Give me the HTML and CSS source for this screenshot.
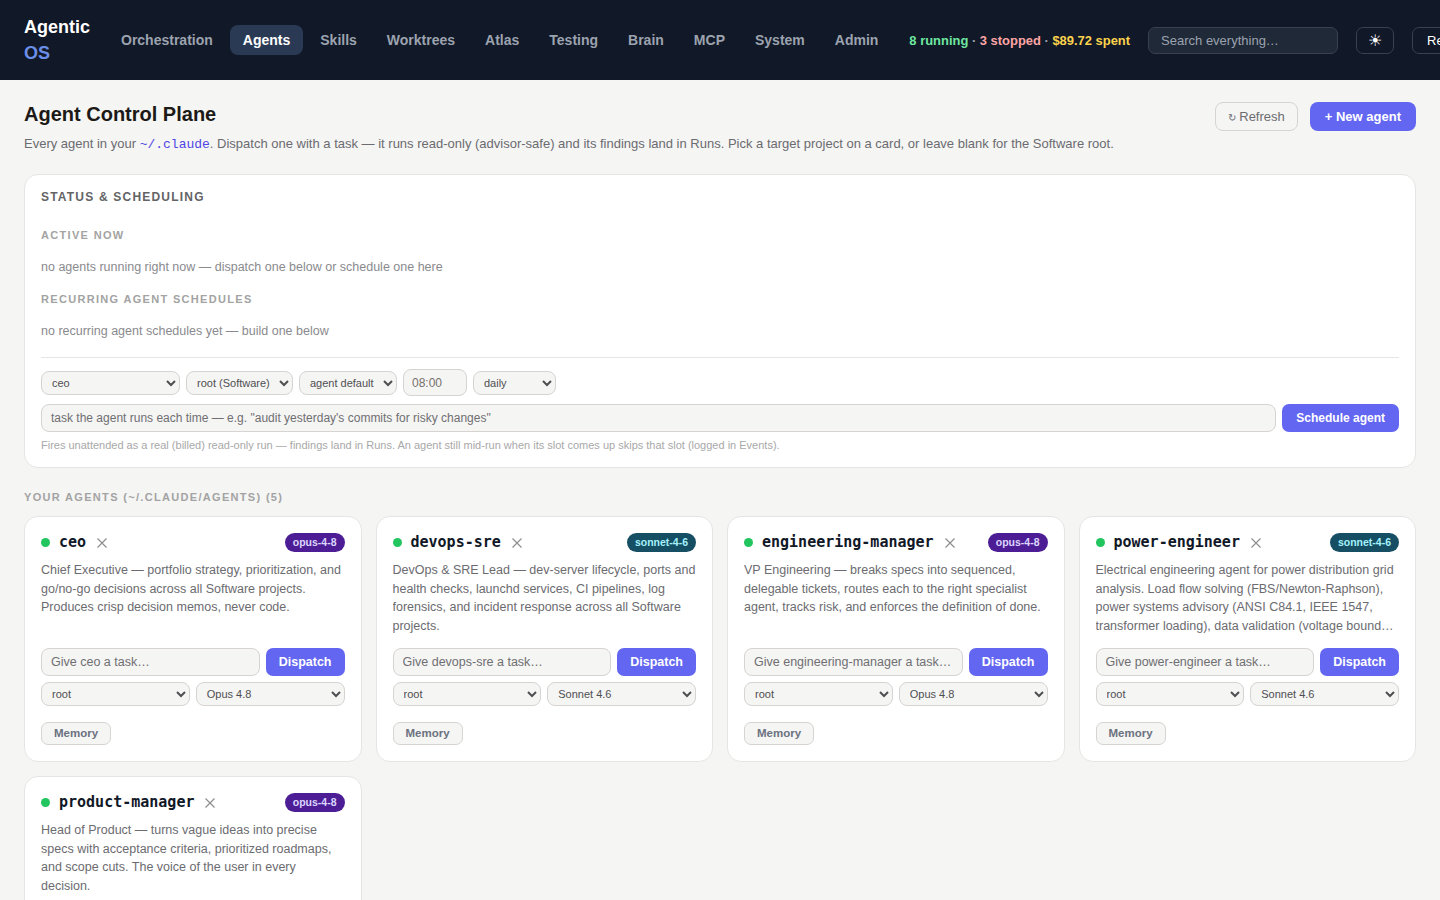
FILE: index.html
```html
<!DOCTYPE html>
<html>

<head>
    <meta http-equiv="Content-Type" content="text/html; charset=utf-8" />
    <title>Agentic OS - Agents</title>
    <link rel="stylesheet" href="styles.css">
</head>

<body>
    <header class="topbar">
        <div class="logo">Agentic <span>OS</span></div>
        <nav class="nav">
            <a>Orchestration</a>
            <a class="active">Agents</a>
            <a>Skills</a>
            <a>Worktrees</a>
            <a>Atlas</a>
            <a>Testing</a>
            <a>Brain</a>
            <a>MCP</a>
            <a>System</a>
            <a>Admin</a>
        </nav>
        <div class="stats"><span class="green">8 running</span> · <span class="red">3 stopped</span> · <span class="amber">$89.72 spent</span></div>
        <input class="search" placeholder="Search everything…" />
        <button class="theme">☀</button>
        <button class="ghost-top">Refresh</button>
    </header>

    <main class="page">
        <div class="page-head">
            <div>
                <h1>Agent Control Plane</h1>
                <p class="sub">Every agent in your <code>~/.claude</code>. Dispatch one with a task — it runs read-only (advisor-safe) and its findings land in Runs. Pick a target project on a card, or leave blank for the Software root.</p>
            </div>
            <div class="head-actions">
                <button class="btn-outline"><span>↻</span> Refresh</button>
                <button class="btn-primary">+ New agent</button>
            </div>
        </div>

        <section class="panel">
            <h2>Status &amp; Scheduling</h2>
            <h3>Active now</h3>
            <p class="empty">no agents running right now — dispatch one below or schedule one here</p>
            <h3>Recurring agent schedules</h3>
            <p class="empty">no recurring agent schedules yet — build one below</p>
            <div class="sched">
                <div class="sched-row">
                    <select class="s-agent"><option>ceo</option></select>
                    <select><option>root (Software)</option></select>
                    <select><option>agent default</option></select>
                    <input class="s-time" value="08:00" />
                    <select class="s-freq"><option>daily</option></select>
                </div>
                <div class="sched-task">
                    <input placeholder="task the agent runs each time — e.g. &quot;audit yesterday's commits for risky changes&quot;" />
                    <button class="btn-primary">Schedule agent</button>
                </div>
                <p class="note">Fires unattended as a real (billed) read-only run — findings land in Runs. An agent still mid-run when its slot comes up skips that slot (logged in Events).</p>
            </div>
        </section>

        <div class="section-label">Your agents (~/.claude/agents) (5)</div>

        <div class="agents">
            <div class="card">
                <div class="card-head">
                    <i class="dot"></i><b>ceo</b>
                    <svg class="del" viewBox="0 0 12 12"><path d="M1.5 1.5l9 9M10.5 1.5l-9 9" /></svg>
                    <span class="tag opus">opus-4-8</span>
                </div>
                <p class="desc">Chief Executive — portfolio strategy, prioritization, and go/no-go decisions across all Software projects. Produces crisp decision memos, never code.</p>
                <div class="task"><input placeholder="Give ceo a task…" /><button class="btn-primary">Dispatch</button></div>
                <div class="pick"><select><option>root</option></select><select><option>Opus 4.8</option></select></div>
                <button class="memory">Memory</button>
            </div>

            <div class="card">
                <div class="card-head">
                    <i class="dot"></i><b>devops-sre</b>
                    <svg class="del" viewBox="0 0 12 12"><path d="M1.5 1.5l9 9M10.5 1.5l-9 9" /></svg>
                    <span class="tag sonnet">sonnet-4-6</span>
                </div>
                <p class="desc">DevOps &amp; SRE Lead — dev-server lifecycle, ports and health checks, launchd services, CI pipelines, log forensics, and incident response across all Software projects.</p>
                <div class="task"><input placeholder="Give devops-sre a task…" /><button class="btn-primary">Dispatch</button></div>
                <div class="pick"><select><option>root</option></select><select><option>Sonnet 4.6</option></select></div>
                <button class="memory">Memory</button>
            </div>

            <div class="card">
                <div class="card-head">
                    <i class="dot"></i><b>engineering-manager</b>
                    <svg class="del" viewBox="0 0 12 12"><path d="M1.5 1.5l9 9M10.5 1.5l-9 9" /></svg>
                    <span class="tag opus">opus-4-8</span>
                </div>
                <p class="desc">VP Engineering — breaks specs into sequenced, delegable tickets, routes each to the right specialist agent, tracks risk, and enforces the definition of done.</p>
                <div class="task"><input placeholder="Give engineering-manager a task…" /><button class="btn-primary">Dispatch</button></div>
                <div class="pick"><select><option>root</option></select><select><option>Opus 4.8</option></select></div>
                <button class="memory">Memory</button>
            </div>

            <div class="card">
                <div class="card-head">
                    <i class="dot"></i><b>power-engineer</b>
                    <svg class="del" viewBox="0 0 12 12"><path d="M1.5 1.5l9 9M10.5 1.5l-9 9" /></svg>
                    <span class="tag sonnet">sonnet-4-6</span>
                </div>
                <p class="desc">Electrical engineering agent for power distribution grid analysis. Load flow solving (FBS/Newton-Raphson), power systems advisory (ANSI C84.1, IEEE 1547, transformer loading), data validation (voltage bound…</p>
                <div class="task"><input placeholder="Give power-engineer a task…" /><button class="btn-primary">Dispatch</button></div>
                <div class="pick"><select><option>root</option></select><select><option>Sonnet 4.6</option></select></div>
                <button class="memory">Memory</button>
            </div>

            <div class="card">
                <div class="card-head">
                    <i class="dot"></i><b>product-manager</b>
                    <svg class="del" viewBox="0 0 12 12"><path d="M1.5 1.5l9 9M10.5 1.5l-9 9" /></svg>
                    <span class="tag opus">opus-4-8</span>
                </div>
                <p class="desc">Head of Product — turns vague ideas into precise specs with acceptance criteria, prioritized roadmaps, and scope cuts. The voice of the user in every decision.</p>
                <div class="task"><input placeholder="Give product-manager a task…" /><button class="btn-primary">Dispatch</button></div>
                <div class="pick"><select><option>root</option></select><select><option>Opus 4.8</option></select></div>
                <button class="memory">Memory</button>
            </div>
        </div>
    </main>
</body>

</html>
```

FILE: styles.css
```css
* {
    box-sizing: border-box;
}

html,
body {
    margin: 0;
    height: 900px;
    overflow: hidden;
}

body {
    background: #f5f5f4;
    color: #1c1917;
    font-family: "Liberation Sans", Arial, sans-serif;
    font-size: 13px;
}

input,
select,
button {
    font-family: inherit;
}

/* top bar */
.topbar {
    height: 80px;
    background: #111827;
    padding: 0 24px;
    display: flex;
    align-items: center;
    white-space: nowrap;
    overflow: hidden;
}

.logo {
    width: 68px;
    flex-shrink: 0;
    white-space: normal;
    color: #fff;
    font-size: 18px;
    font-weight: 700;
    line-height: 26px;
    margin-right: 16px;
}

.logo span {
    color: #6b8fe8;
}

.nav {
    display: flex;
    gap: 4px;
    flex-shrink: 0;
}

.nav a {
    color: #9ca3af;
    font-size: 14px;
    font-weight: 700;
    line-height: 18px;
    padding: 6px 13px;
    border-radius: 8px;
}

.nav a.active {
    background: #2a3a55;
    color: #fff;
}

.stats {
    flex-shrink: 0;
    margin-left: 18px;
    color: #9ca3af;
    font-size: 12.95px;
    font-weight: 700;
}

.green { color: #6ee7a0; }
.red { color: #fca5a5; }
.amber { color: #fcd34d; }

.search {
    flex-shrink: 0;
    width: 190px;
    height: 27px;
    margin-left: 18px;
    padding: 0 12px;
    background: #1f2937;
    border: 1px solid #374151;
    border-radius: 7px;
    font-size: 13px;
    color: #fff;
}

.search::placeholder {
    color: #9ca3af;
}

.theme,
.ghost-top {
    flex-shrink: 0;
    height: 27px;
    background: transparent;
    border: 1px solid #374151;
    border-radius: 7px;
    color: #fff;
    font-size: 14px;
}

.theme {
    width: 38px;
    margin-left: 18px;
    padding: 0;
    font-size: 16px;
}

.ghost-top {
    margin-left: 18px;
    padding: 0 14px;
    font-size: 13px;
}

/* page */
.page {
    padding: 22px 24px;
}

.page-head {
    display: flex;
    justify-content: space-between;
    align-items: flex-start;
    margin-bottom: 21px;
}

h1 {
    margin: 0;
    font-size: 20px;
    font-weight: 700;
    line-height: 24px;
}

.sub {
    margin: 9px 0 0;
    color: #6b6b70;
    font-size: 13px;
    line-height: 18px;
    white-space: nowrap;
}

.sub code {
    font-family: "Liberation Mono", monospace;
    font-size: 13px;
    line-height: 1;
    color: #4f46e5;
}

.head-actions {
    display: flex;
    gap: 12px;
}

.btn-outline {
    height: 29px;
    padding: 0 12px;
    background: transparent;
    border: 1px solid #d6d3d1;
    border-radius: 8px;
    color: #6b6b70;
    font-size: 13px;
}

.btn-outline span {
    font-size: 10px;
}

.btn-primary {
    flex-shrink: 0;
    height: 28px;
    padding: 0 13px;
    background: #6366f1;
    border: 0;
    border-radius: 7px;
    color: #fff;
    font-size: 12.5px;
    font-weight: 700;
}

.head-actions .btn-primary {
    height: 29px;
    padding: 0 15px;
    border-radius: 8px;
    font-size: 13px;
}

.panel {
    height: 294px;
    background: #fff;
    border: 1px solid #e7e5e4;
    border-radius: 14px;
    padding: 15px 16px;
}

.panel h2 {
    margin: 0 0 24px;
    color: #636366;
    font-size: 12px;
    font-weight: 700;
    line-height: 14px;
    letter-spacing: 1.2px;
    text-transform: uppercase;
}

.panel h3 {
    margin: 0 0 18px;
    color: #a3a3a3;
    font-size: 11px;
    font-weight: 700;
    line-height: 14px;
    letter-spacing: 1.32px;
    text-transform: uppercase;
}

.empty {
    margin: 0 0 18px;
    color: #8a8a8e;
    font-size: 12.5px;
    line-height: 14px;
}

.empty:last-of-type {
    margin-bottom: 19px;
}

.sched {
    border-top: 1px solid #e7e5e4;
    padding-top: 11px;
}

.sched-row,
.sched-task {
    display: flex;
    align-items: center;
    gap: 6px;
}

select {
    height: 24px;
    padding: 0 6px;
    background-color: #f5f5f4;
    border: 1px solid #d6d3d1;
    border-radius: 8px;
    color: #4f4f52;
    font-size: 11px;
}

input {
    background: #f5f5f4;
    border: 1px solid #d6d3d1;
    border-radius: 8px;
    color: #44403c;
    font-size: 12.5px;
}

input::placeholder {
    color: #6f6f72;
}

.s-agent {
    width: 139px;
}

.s-time {
    width: 64px;
    height: 27px;
    padding: 0 8px;
    font-size: 12px;
    color: #78716c;
}

.s-freq {
    width: 83px;
}

.sched-task {
    margin-top: 8px;
}

.sched-task input {
    flex: 1;
    height: 28px;
    padding: 0 9px;
    font-size: 12px;
}

.sched-task .btn-primary {
    padding: 0 14px;
    font-size: 12px;
}

.note {
    margin: 7px 0 0;
    color: #a8a8a8;
    font-size: 11px;
    line-height: 13px;
}

.section-label {
    margin: 22px 0 12px;
    color: #a3a3a3;
    font-size: 11px;
    font-weight: 700;
    line-height: 14px;
    letter-spacing: 1.32px;
    text-transform: uppercase;
}

/* agent cards */
.agents {
    display: grid;
    grid-template-columns: repeat(4, 1fr);
    gap: 14px;
}

.card {
    height: 246px;
    background: #fff;
    border: 1px solid #e7e5e4;
    border-radius: 14px;
    padding: 16px;
    display: flex;
    flex-direction: column;
    align-items: flex-start;
}

.card-head {
    width: 100%;
    height: 20px;
    display: flex;
    align-items: center;
}

.dot {
    width: 9px;
    height: 9px;
    border-radius: 50%;
    background: #22c55e;
    margin-right: 9px;
    flex-shrink: 0;
}

.card-head b {
    font-family: "DejaVu Sans Mono", monospace;
    font-size: 15px;
    font-weight: 700;
    color: #111827;
    margin-top: -2px;
}

.del {
    width: 12px;
    height: 12px;
    margin-left: 10px;
    flex-shrink: 0;
    fill: none;
    stroke: #8b8b8b;
    stroke-width: 1.1;
}

.tag {
    margin-left: auto;
    height: 19px;
    padding: 0 8px;
    border-radius: 10px;
    font-size: 10.5px;
    font-weight: 700;
    line-height: 19px;
}

.opus {
    background: #4c1d95;
    color: #ddd6fe;
}

.sonnet {
    background: #164e63;
    color: #a5f3fc;
}

.desc {
    margin: 8.4px 0 0;
    height: 74.6px;
    color: #6b6b70;
    font-size: 12.5px;
    line-height: 18.75px;
    overflow: hidden;
}

.task {
    width: 100%;
    display: flex;
    gap: 6px;
    margin-top: 14px;
}

.task input {
    flex: 1;
    min-width: 0;
    height: 28px;
    padding: 0 9px;
}

.pick {
    width: 100%;
    display: flex;
    gap: 6px;
    margin-top: 6px;
}

.pick select {
    flex: 1;
    min-width: 0;
}

.memory {
    margin-top: 16px;
    height: 24px;
    padding: 0 12px;
    background: #f5f5f4;
    border: 1px solid #d6d3d1;
    border-radius: 7px;
    color: #6b7280;
    font-size: 11.5px;
    font-weight: 700;
}
```
